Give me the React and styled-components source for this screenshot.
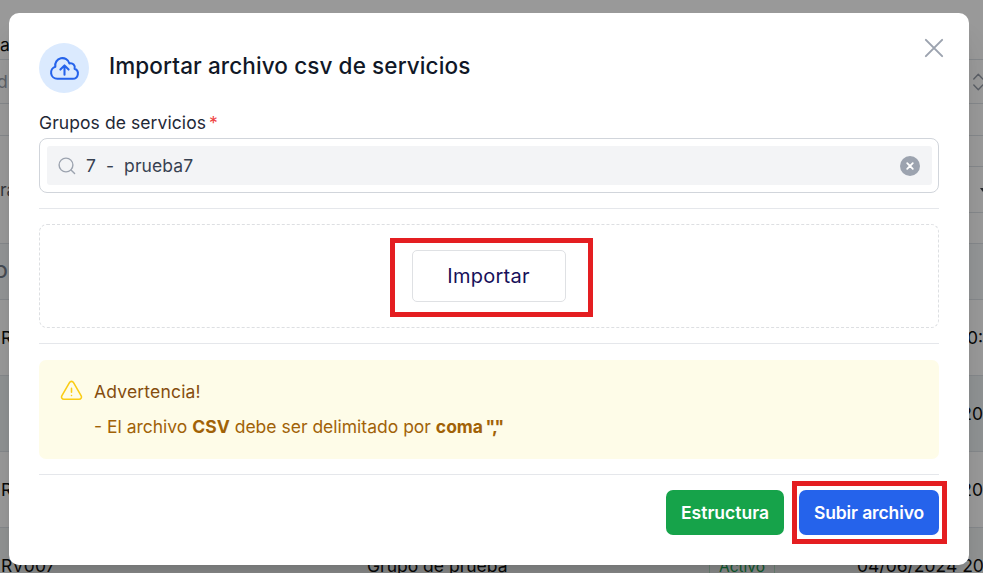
import React from "react";
import styled, { createGlobalStyle } from "styled-components";

const Global = createGlobalStyle`
  * { box-sizing: border-box; }
  html, body { margin: 0; padding: 0; }
  body {
    width: 983px; height: 573px; overflow: hidden;
    font-family: Inter, "Liberation Sans", sans-serif;
    font-size: 17.5px; color: #111827; background: #999;
  }
  svg { display: block; flex: none; }
`;

const Screen = styled.div`
  position: relative;
  width: 983px;
  height: 573px;
  overflow: hidden;
`;

const Page = styled.div`
  display: flex;
  flex-direction: column;
  width: 983px;
  background: #999;
`;

const Row = styled.div`
  display: flex;
  flex: none;
  justify-content: space-between;
  align-items: center;
  height: ${(p) => p.$h}px;
  padding-top: ${(p) => p.$pt || 0}px;
  background: ${(p) => p.$bg || "transparent"};
  border-bottom: 1px solid #85888b;
  color: ${(p) => p.$color || "#080808"};
  font-weight: ${(p) => p.$weight || 400};
  white-space: pre;
`;

const Cell = styled.span`
  margin-left: ${(p) => p.$ml || 0}px;
  margin-right: ${(p) => p.$mr || 0}px;
`;

const SideFilter = styled.div`
  display: flex;
  align-items: center;
  justify-content: flex-end;
  width: 20px;
  height: 47px;
  border: solid #85888b;
  border-width: 1px 0;
`;

const LastRow = styled(Row)`
  display: grid;
  grid-template-columns: 367px 342px 148px 1fr;
  align-items: start;
  padding-top: 27px;
  border: 0;
`;

const Tag = styled.span`
  justify-self: start;
  width: 66px;
  height: 28px;
  border: 1px solid #71897a;
  border-radius: 4px;
  color: #0f5f31;
  font-size: 15.5px;
  line-height: 21px;
  text-align: center;
`;

const Dialog = styled.section`
  position: absolute;
  left: 9px;
  top: 13px;
  width: 960px;
  height: 552px;
  padding: 30px;
  display: flex;
  flex-direction: column;
  background: #fff;
  border-radius: 10px;
  box-shadow: 0 25px 31px -6px rgba(0, 0, 0, 0.14), 0 10px 12px -7px rgba(0, 0, 0, 0.1);

  > * { flex-shrink: 0; }
`;

const Header = styled.header`
  display: flex;
  height: 50px;
  align-items: center;
`;

const Badge = styled.div`
  display: grid;
  place-items: center;
  width: 50px;
  height: 50px;
  border-radius: 50%;
  background: #dbeafe;
`;

const Title = styled.h3`
  margin: 0 auto 4px 20px;
  font-size: 22.5px;
  font-weight: 500;
  line-height: 30px;
  letter-spacing: 0.11px;
  white-space: nowrap;
`;

const Close = styled.button`
  align-self: flex-start;
  margin: -10px -10px 0 0;
  padding: 0;
  border: 0;
  background: none;
`;

const Label = styled.label`
  height: 45px;
  padding-top: 17px;
  line-height: 25px;
  letter-spacing: 0.08px;
  color: #1f2937;
`;

const Required = styled.span`
  margin-left: 3px;
  color: #ef4444;
`;

const Field = styled.div`
  height: 55px;
  padding: 7px 6px 7px 7px;
  border: 1px solid #d1d5db;
  border-radius: 8px;
`;

const Selected = styled.div`
  display: flex;
  align-items: center;
  height: 39px;
  padding: 0 12px 0 11px;
  background: #f3f4f6;
  border-radius: 3px;
  color: #374151;
`;

const Value = styled.span`
  margin-left: 10px;
  margin-right: auto;
  white-space: pre;
  letter-spacing: 0.08px;
`;

const Divider = styled.div`
  height: 1px;
  margin-top: ${(p) => p.$mt || 0}px;
  background: #e5e7eb;
`;

const DropZone = styled.div`
  display: flex;
  justify-content: center;
  height: 104px;
  margin: 15px 0;
  padding-top: 13px;
  border: 1px dashed #dddfe2;
  border-radius: 8px;
`;

const Highlight = styled.div`
  display: flex;
  height: ${(p) => p.$h}px;
  width: ${(p) => p.$w}px;
  padding: ${(p) => p.$pad};
  margin: ${(p) => p.$margin};
  border: 5px solid #e41e21;
`;

const ImportButton = styled.button`
  width: 154px;
  height: 52px;
  padding: 0;
  border: 1px solid #dfe1e4;
  border-radius: 5px;
  background: #fff;
  color: #17105a;
  font: 400 20px Inter, sans-serif;
  letter-spacing: 0.25px;
`;

const Alert = styled.div`
  display: flex;
  height: 99px;
  margin: 16px 0 15px;
  padding: 19px 20px;
  border-radius: 7px;
  background: #fefce8;
`;

const AlertBody = styled.div`
  margin-left: 10px;
  color: #a16207;
`;

const AlertTitle = styled.div`
  line-height: 25px;
  height: 35px;
  letter-spacing: 0.18px;
  color: #854d0e;
`;

const AlertText = styled.div`
  line-height: 25px;
  white-space: nowrap;
`;

const Quoted = styled.b`
  letter-spacing: -1.6px;
`;

const Footer = styled.footer`
  display: flex;
  justify-content: flex-end;
  align-items: flex-start;
  padding-top: 15px;
`;

const Action = styled.button`
  width: ${(p) => p.$w}px;
  height: 45px;
  flex: none;
  padding: 0;
  border: 0;
  border-radius: 7px;
  background: ${(p) => p.$bg};
  color: #fff;
  font: 600 17.5px Inter, sans-serif;
  letter-spacing: ${(p) => p.$ls || 0}px;
`;

const CloudIcon = () => (
  <svg width="33" height="33" viewBox="0 0 24 24" fill="none" stroke="#2563eb" strokeWidth="1.5" strokeLinecap="round" strokeLinejoin="round">
    <path d="M12 16.5V9.75m0 0l3 3m-3-3l-3 3M6.75 19.5a4.5 4.5 0 01-1.41-8.775 5.25 5.25 0 0110.233-2.33 3 3 0 013.758 3.848A3.752 3.752 0 0118 19.5H6.75z" />
  </svg>
);

const CloseIcon = () => (
  <svg width="30" height="30" viewBox="0 0 24 24" fill="none" stroke="#9ca3af" strokeWidth="1.6" strokeLinecap="round">
    <path d="M5.5 5.5l13 13M18.5 5.5l-13 13" />
  </svg>
);

const SearchIcon = () => (
  <svg width="18" height="18" viewBox="0 0 18 18" fill="none" stroke="#9ca3af" strokeWidth="1.4" strokeLinecap="round">
    <circle cx="8" cy="8" r="6.9" />
    <path d="M13 13l3.6 3.6" />
  </svg>
);

const ClearIcon = () => (
  <svg width="20" height="20" viewBox="0 0 20 20">
    <circle cx="10" cy="10" r="10" fill="#9ca3af" />
    <path d="M7.2 7.2l5.6 5.6M12.8 7.2l-5.6 5.6" stroke="#fff" strokeWidth="1.8" strokeLinecap="round" />
  </svg>
);

const WarningIcon = () => (
  <svg width="25" height="25" viewBox="0 0 24 24" fill="none" stroke="#facc15" strokeWidth="1.5" strokeLinecap="round" strokeLinejoin="round">
    <path d="M12 9v3.75m-9.303 3.376c-.866 1.5.217 3.374 1.948 3.374h14.71c1.73 0 2.813-1.874 1.948-3.374L13.949 3.378c-.866-1.5-3.032-1.5-3.898 0L2.697 16.126zM12 15.75h.007v.008H12v-.008z" />
  </svg>
);

const SortIcon = () => (
  <svg width="10" height="18" viewBox="0 0 10 18" fill="none" stroke="#5b5f66" strokeWidth="1.4" strokeLinecap="round" strokeLinejoin="round">
    <path d="M.8 6L5.3 1.2 9.8 6M.8 12l4.5 4.8L9.8 12" />
  </svg>
);

const CaretIcon = () => (
  <svg width="3" height="6" viewBox="0 0 3 6">
    <path d="M0 1h3v4z" fill="#26292e" />
  </svg>
);

export default function App() {
  return (
    <Screen>
      <Global />
      <Page>
        <Row $h={60} $pt={30}><Cell>a</Cell></Row>
        <Row $h={44} $color="#5d6168"><Cell $ml={-3}>d</Cell><SortIcon /></Row>
        <Row $h={32} />
        <Row $h={108} $color="#33363b">
          <Cell>ra</Cell>
          <SideFilter><CaretIcon /></SideFilter>
        </Row>
        <Row $h={56} $bg="#939596" $color="#464b53" $weight={600}><Cell $ml={-5}>D</Cell></Row>
        <Row $h={76}><Cell $ml={1}>RV003</Cell><Cell>20:</Cell></Row>
        <Row $h={76} $bg="#8f9293"><Cell /><Cell>20</Cell></Row>
        <Row $h={76}><Cell $ml={1}>RV006</Cell><Cell>20</Cell></Row>
        <LastRow $h={46} $bg="#919393">
          <Cell $ml={1}>RV007</Cell>
          <Cell>Grupo de prueba</Cell>
          <Tag>Activo</Tag>
          <Cell>04/06/2024 20</Cell>
        </LastRow>
      </Page>
      <Dialog>
        <Header>
          <Badge><CloudIcon /></Badge>
          <Title>Importar archivo csv de servicios</Title>
          <Close aria-label="Cerrar"><CloseIcon /></Close>
        </Header>
        <Label>Grupos de servicios<Required>*</Required></Label>
        <Field>
          <Selected>
            <SearchIcon />
            <Value>{"7  -  prueba7"}</Value>
            <ClearIcon />
          </Selected>
        </Field>
        <Divider $mt={15} />
        <DropZone>
          <Highlight $w={203} $h={79} $pad="7px 17px" $margin="0 0 0 4px">
            <ImportButton>Importar</ImportButton>
          </Highlight>
        </DropZone>
        <Divider />
        <Alert>
          <WarningIcon />
          <AlertBody>
            <AlertTitle>Advertencia!</AlertTitle>
            <AlertText>- El archivo <b>CSV</b> debe ser delimitado por <b>coma</b><Quoted> ","</Quoted></AlertText>
          </AlertBody>
        </Alert>
        <Divider />
        <Footer>
          <Action $w={118} $bg="#16a34a">Estructura</Action>
          <Highlight $w={155} $h={63} $pad="4px 2px" $margin="-9px -8px 0 8px">
            <Action $w={140} $bg="#2563eb" $ls={-0.12}>Subir archivo</Action>
          </Highlight>
        </Footer>
      </Dialog>
    </Screen>
  );
}
